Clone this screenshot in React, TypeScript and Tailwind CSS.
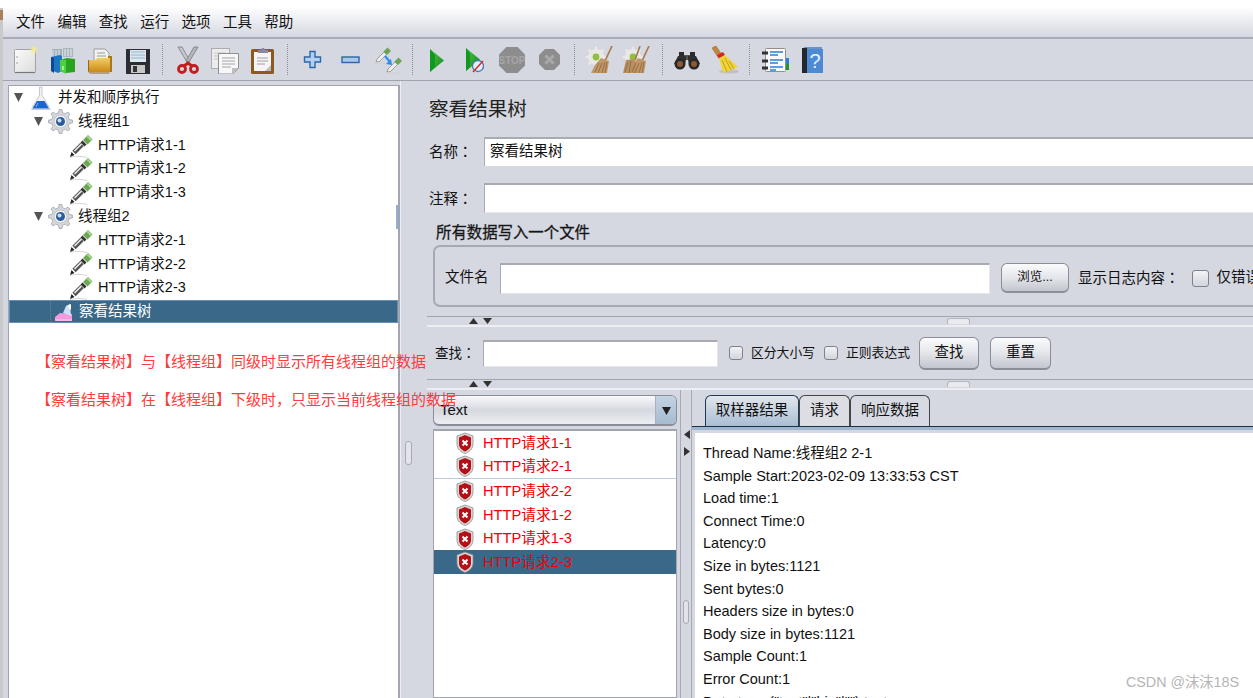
import React from "react";

const CJK = "font-['Liberation_Sans','Noto_Sans_CJK_SC',sans-serif]";

function gearPath(cx: number, cy: number, r1: number, r2: number, n: number) {
  let d = "";
  for (let i = 0; i < n; i++) {
    const a = (i / n) * Math.PI * 2;
    const s = Math.PI / n;
    const pts = [
      [a - s * 0.55, r1],
      [a - s * 0.3, r2],
      [a + s * 0.3, r2],
      [a + s * 0.55, r1],
    ];
    pts.forEach(([t, r], j) => {
      d += `${i === 0 && j === 0 ? "M" : "L"}${(cx + Math.cos(t) * r).toFixed(2)} ${(cy + Math.sin(t) * r).toFixed(2)} `;
    });
  }
  return d + "Z";
}

const Svg = ({ w, h, children }: { w: number; h: number; children: React.ReactNode }) => (
  <svg width={w} height={h} viewBox={`0 0 ${w} ${h}`} className="shrink-0 block">
    {children}
  </svg>
);

const Colon = () => <span className="font-['Noto_Sans_CJK_TC',sans-serif]">：</span>;

const NewDoc = () => (
  <Svg w={26} h={28}>
    <defs>
      <linearGradient id="nd" x1="0" y1="0" x2="1" y2="1">
        <stop offset="0" stopColor="#fbfbfb" />
        <stop offset="1" stopColor="#dcdcdc" />
      </linearGradient>
      <radialGradient id="ndg">
        <stop offset="0" stopColor="#fff27a" />
        <stop offset="1" stopColor="#fff27a" stopOpacity="0" />
      </radialGradient>
    </defs>
    <rect x="2.5" y="3.5" width="21" height="23" rx="1" fill="url(#nd)" stroke="#a3a3a3" />
    <path d="M3 26.5h20" stroke="#777" strokeWidth="1.2" />
    <circle cx="5" cy="11" r=".8" fill="#999" />
    <circle cx="5" cy="17" r=".8" fill="#999" />
    <circle cx="22" cy="4" r="4.5" fill="url(#ndg)" />
  </Svg>
);

const Books = () => (
  <Svg w={28} h={28}>
    <rect x="3" y="3" width="10" height="9" fill="#9fb0ba" />
    <rect x="14" y="2" width="10" height="9" fill="#a9b7bd" />
    <path d="M4 4v7M7 4v7M10 4v7M16 3v7M19 3v7M22 3v7" stroke="#e8eef0" />
    <path d="M2 11l9-2 2 1v15l-4 2-7-3z" fill="#1c74c6" />
    <path d="M2 11l3 1v15l-3-2z" fill="#0d4a8c" />
    <path d="M11 14l7-2 8 1v13l-9 1-6-2z" fill="#27a51e" />
    <path d="M11 14l6 0v14l-6-3z" fill="#4fd043" />
    <path d="M14 20v4" stroke="#d6ffd0" strokeWidth="1.2" />
  </Svg>
);

const Folder = () => (
  <Svg w={27} h={28}>
    <defs>
      <linearGradient id="fo" x1="0" y1="0" x2="0" y2="1">
        <stop offset="0" stopColor="#f3cd63" />
        <stop offset="1" stopColor="#c98a17" />
      </linearGradient>
    </defs>
    <path d="M7 3h11l4 4v10H7z" fill="#f2f2f2" stroke="#9c9c9c" />
    <path d="M10 7h8M10 10h9M10 13h9" stroke="#9a9a9a" />
    <path d="M21 10h4v16h-4z" fill="#a9781e" />
    <path d="M2 14h6l3-2h12v14H2z" fill="url(#fo)" />
    <path d="M1.5 14v11c0 1 1 2 2 2h19" fill="none" stroke="#97691a" />
  </Svg>
);

const Floppy = () => (
  <Svg w={26} h={28}>
    <path d="M1 3h24v25H1z" fill="#2b2d33" />
    <rect x="5" y="4" width="16" height="12" fill="#dfe7ee" />
    <path d="M6 6h14M6 9h14M6 12h14" stroke="#8fb3d1" strokeWidth="1.2" />
    <rect x="6" y="19" width="14" height="8" fill="#c7c7c7" />
    <rect x="8" y="20" width="4" height="6" fill="#333" />
  </Svg>
);

const Scissors = () => (
  <Svg w={24} h={28}>
    <path d="M2 1l9 15 3-1L6 1z" fill="#c6c8cc" stroke="#77797e" strokeWidth=".8" />
    <path d="M22 1l-9 15-3-1 8-14z" fill="#b5b7bb" stroke="#77797e" strokeWidth=".8" />
    <circle cx="6" cy="23" r="3.5" fill="none" stroke="#c31d1d" strokeWidth="2.8" />
    <circle cx="18" cy="23" r="3.5" fill="none" stroke="#c31d1d" strokeWidth="2.8" />
    <path d="M8 20l4-3 4 3" fill="none" stroke="#c31d1d" strokeWidth="3" />
  </Svg>
);

const Copy = () => (
  <Svg w={30} h={28}>
    <rect x="1.5" y="2.5" width="18" height="20" fill="#ececec" stroke="#adadad" />
    <path d="M4 7h12M4 10h12M4 13h12" stroke="#c6c6c6" />
    <path d="M8.5 7.5h20v15l-6 5.5h-14z" fill="#f7f7f7" stroke="#8f8f8f" />
    <path d="M12 12h13M12 15h13M12 18h13M12 21h9" stroke="#a3a3a3" />
    <path d="M22 28v-6h7z" fill="#bdbdbd" />
  </Svg>
);

const Clip = () => (
  <Svg w={25} h={28}>
    <rect x="1" y="3" width="23" height="25" rx="1.5" fill="#8b5a1c" />
    <path d="M4 6h17v19H4z" fill="#f5f5f5" />
    <path d="M7 12h11M7 15h11M7 18h8" stroke="#a0a0a0" />
    <path d="M15 25l6-6v6z" fill="#bdbdbd" />
    <path d="M8 7V4h3l1-2h2l1 2h3v3z" fill="#8a8d90" />
  </Svg>
);

const Plus = () => (
  <Svg w={19} h={19}>
    <path
      d="M7 1.5h5v5.5h5.5v5H12v5.5H7V12H1.500V7H7z"
      fill="#b3d0ec"
      stroke="#2c66ab"
      strokeWidth="1.4"
    />
  </Svg>
);

const Minus = () => (
  <Svg w={19} h={8}>
    <rect x="1" y="1" width="17" height="5.500" fill="#a9c8e6" stroke="#2c66ab" strokeWidth="1.4" />
  </Svg>
);

const DropperSmall = ({ x, y }: { x: number; y: number }) => (
  <g transform={`translate(${x} ${y})`}>
    <path d="M1 15l1-3 7-7 2.500 2.500-7 7z" fill="#ededed" stroke="#8d8d8d" strokeWidth=".8" />
    <path d="M8.500 4.500l4-4 3.500 3.500-4 4z" fill="#6ea356" />
  </g>
);

const Toggle = () => (
  <Svg w={28} h={28}>
    <DropperSmall x={1} y={1} />
    <DropperSmall x={12} y={11} />
    <path d="M1 17h13M12 27h13" stroke="#d0d0d0" />
    <path d="M11 10l5 6" stroke="#2f8cf0" strokeWidth="2.200" />
    <path d="M18 19l-6-1 5-5z" fill="#2f8cf0" />
  </Svg>
);

const Play = () => (
  <Svg w={16} h={26}>
    <defs>
      <linearGradient id="pl" x1="0" y1="0" x2="1" y2="1">
        <stop offset="0" stopColor="#5cc04e" />
        <stop offset="1" stopColor="#0a8a18" />
      </linearGradient>
    </defs>
    <path d="M1 2l14 11.500L1 25z" fill="url(#pl)" />
    <path d="M1 2v23l5-5V8z" fill="#0f9a1d" />
  </Svg>
);

const PlayNo = () => (
  <Svg w={19} h={27}>
    <path d="M1 2l14 11.500L1 25z" fill="url(#pl)" />
    <path d="M1 2v23l4-4V7z" fill="#0f9a1d" />
    <circle cx="13" cy="20" r="5.500" fill="#e5eef8" stroke="#3f78c0" strokeWidth="1.300" />
    <path d="M8 26l10-11" stroke="#e02a2a" strokeWidth="1.600" />
  </Svg>
);

const Stop = () => (
  <Svg w={28} h={28}>
    <path d="M8.500 1h11L27 8.500v11L19.500 27h-11L1 19.500v-11z" fill="#8d8d8d" />
    <text x="14" y="18" textAnchor="middle" fontSize="10" fontWeight="700" fill="#a6a6a6" fontFamily="Liberation Sans">
      STOP
    </text>
  </Svg>
);

const XStop = () => (
  <Svg w={23} h={23}>
    <path d="M7 1h9l6 6v9l-6 6H7l-6-6V7z" fill="#8d8d8d" />
    <path d="M7.500 7.500l8 8M15.500 7.500l-8 8" stroke="#a9a9a9" strokeWidth="3" />
  </Svg>
);

const GearBroom = ({ two }: { two?: boolean }) => (
  <Svg w={30} h={28}>
    <path d={gearPath(11, 11, 8.5, 11, 8)} fill="#e8e8e8" stroke="#cfcfcf" strokeWidth=".5" />
    <circle cx="11" cy="11" r="3.400" fill="#8fc23a" />
    <path d="M27 0l-7 15" stroke="#a5784a" strokeWidth="1.600" />
    {two && <path d="M18 0l-5 14" stroke="#a5784a" strokeWidth="1.600" />}
    <path d="M16 12l8 3-2 12H6l4-8z" fill="#c09768" />
    {two && <path d="M4 14l9-1 1 14H1z" fill="#b88f63" />}
    <path d="M10 26l4-9M13 27l4-10M17 27l3-11M20 27l2-11" stroke="#94693c" strokeWidth=".9" />
    {two && <path d="M3 26l3-10M7 27l2-12" stroke="#94693c" strokeWidth=".9" />}
  </Svg>
);

const Binoc = () => (
  <Svg w={28} h={20}>
    <path d="M6 2h5v6H6zM17 2h5v6h-5z" fill="#2b2b2b" />
    <rect x="11" y="5" width="6" height="5" fill="#555" />
    <path d="M5 6h8v4l-1 4H1z" fill="#2f2f2f" />
    <path d="M15 6h8l4 8H16l-1-4z" fill="#2f2f2f" />
    <circle cx="7" cy="14" r="5.500" fill="#282828" />
    <circle cx="21" cy="14" r="5.500" fill="#282828" />
    <circle cx="7" cy="14" r="3" fill="#8a5a30" />
    <circle cx="21" cy="14" r="3" fill="#8a5a30" />
  </Svg>
);

const Broom = () => (
  <Svg w={28} h={28}>
    <ellipse cx="18" cy="25.500" rx="10" ry="2" fill="#bfc0c4" />
    <path d="M1 2l4-2 6 9-4 2z" fill="#c0883c" stroke="#96682c" strokeWidth=".6" />
    <path d="M6 9l6-3 2 3-6 4z" fill="#d8232a" />
    <path d="M8 12l6-3 13 12-14 6-2-4z" fill="#f0d43a" />
    <path d="M11 14l5 12M14 12l6 12M18 15l5 8" stroke="#c2a11c" />
  </Svg>
);

const ListIcon = () => (
  <Svg w={28} h={26}>
    <rect x="22" y="11" width="6" height="6" fill="#2a7fd8" />
    <rect x="22" y="17" width="6" height="6" fill="#1f9a24" />
    <rect x="4.500" y="1.500" width="20" height="23" rx="1" fill="#f8f8f8" stroke="#8f8f8f" />
    <path d="M1 6h6M1 14h6M1 21h6" stroke="#333" strokeWidth="3" />
    <path d="M9 5h13M9 8h8M9 13h13M9 16h8M9 20h13M9 23h6" stroke="#2a7fd8" strokeWidth="1.400" />
  </Svg>
);

const Help = () => (
  <Svg w={23} h={28}>
    <path d="M3 1h18v3H3z" fill="#6a93c4" />
    <rect x="1" y="2" width="5" height="25" fill="#23262a" />
    <rect x="6" y="3" width="16" height="24" fill="#4d8ad4" />
    <text x="14" y="22" textAnchor="middle" fontSize="20" fill="#e8f2ff" fontFamily="Liberation Sans">
      ?
    </text>
  </Svg>
);

const Dropper = () => (
  <Svg w={24} h={24}>
    <path d="M1 23.500c6-2 12-1 17 0" fill="none" stroke="#d5d5d5" />
    <path d="M5 18.500l8-8" stroke="#555" strokeWidth="4.600" />
    <path d="M5.500 17l7-7" stroke="#f2f2f2" strokeWidth="1.500" />
    <path d="M1 23l1.500-5 3 3z" fill="#222" />
    <path d="M11.500 8.500l4 4 2-2-4-4z" fill="#333" />
    <path d="M14 6l5-5 4.500 4.500-5 5z" fill="#6ea656" />
    <path d="M19 1.500l4 4-1.500 1.500-4-4z" fill="#a2d48a" />
  </Svg>
);

const Flask = () => (
  <Svg w={20} h={24}>
    <path d="M8.500 1h2.500v8l7 12H1.500L8.500 9z" fill="#f0f2f5" stroke="#b8bcc2" strokeWidth=".8" />
    <path d="M6 15h7.500l4.500 7.500H1.500z" fill="#1a66d0" />
    <path d="M7 17l-2 4" stroke="#7fb0ee" />
    <path d="M0.500 23h19" stroke="#8ca0b8" />
  </Svg>
);

const Gear = () => (
  <Svg w={25} h={25}>
    <path d={gearPath(12.5, 12.5, 9, 12, 8)} fill="#d6d8dc" stroke="#9ea1a7" strokeWidth=".8" />
    <circle cx="12.500" cy="12.500" r="6.500" fill="#f1f2f4" stroke="#a9acb2" strokeWidth=".6" />
    <circle cx="12.500" cy="12.500" r="4.500" fill="#2d5c9e" />
    <circle cx="11.500" cy="11.500" r="2" fill="#cfe0f4" />
  </Svg>
);

const ResultIcon = () => (
  <Svg w={20} h={20}>
    <path d="M1 18v-3l5-4 12 1v7H2z" fill="#f39adf" />
    <path d="M1 18h17" stroke="#f6d3ef" />
    <path d="M9 11l3-7 4-2 1 12z" fill="#cfe0fb" />
    <path d="M13 4l4-2v6z" fill="#fff" />
  </Svg>
);

const Shield = () => (
  <Svg w={20} h={22}>
    <path d="M10 1l8 3v8c0 5-4 8-8 9.500C6 20 2 17 2 12V4z" fill="#d9d9d9" stroke="#8a8a8a" strokeWidth=".8" />
    <path d="M10 3l6 2.500V12c0 4-3 6-6 7.500C7 18 4 16 4 12V5.500z" fill="#b50e14" />
    <path d="M7.500 8.500l5 5M12.500 8.500l-5 5" stroke="#fff" strokeWidth="2" />
  </Svg>
);

const Tri = () => (
  <svg width="9" height="9" viewBox="0 0 9 9" className="shrink-0">
    <path d="M0 0h9L4.500 9z" fill="#555" />
  </svg>
);

const Sep = () => (
  <div className="w-[12.4px] h-[31px] flex justify-center shrink-0">
    <div className="w-0 h-full border-l border-dotted border-[#8b8e97]" />
  </div>
);

const Slot = ({ children }: { children: React.ReactNode }) => (
  <div className="w-[37.5px] h-full flex items-center justify-center shrink-0">{children}</div>
);

const Splitter = () => (
  <div className="h-[11px] border-t border-[#a2a5ae] border-b-2 border-b-[#eceef2] relative shrink-0 flex items-center">
    <svg width="24" height="6" viewBox="0 0 24 6" className="ml-[42px] shrink-0">
      <path d="M0 6h9L4.500 0z" fill="#333" />
      <path d="M14 0h9L18.500 6z" fill="#333" />
    </svg>
    <div className="ml-[454px] w-[23px] h-[6px] rounded-t-[3px] border border-[#b2b5bd] border-b-0 bg-[#e8eaee] shrink-0" />
  </div>
);

const Check = ({ cls = "w-[14px] h-[14px]" }: { cls?: string }) => (
  <div className={`rounded-[3px] border border-[#7f828a] bg-gradient-to-b from-[#f2f3f6] to-[#d2d5dc] shrink-0 ${cls}`} />
);

const Btn = ({ children, cls }: { children: React.ReactNode; cls: string }) => (
  <div
    className={`rounded-[6px] border border-[#8b8e96] border-b-2 bg-gradient-to-b from-[#fbfbfc] via-[#e4e6ea] to-[#c3c6ce] flex items-center justify-center shrink-0 text-[#111] ${cls}`}
  >
    {children}
  </div>
);

const TextInput = ({ cls }: { cls: string }) => (
  <div className={`bg-white border-t-2 border-l border-[#a9abb3] border-r border-r-[#e6e7ea] border-b border-b-[#e6e7ea] ${cls}`} />
);

const Req = ({ t }: { t: string }) => (
  <div className="h-[23.8px] flex items-center pl-[60px]">
    <Dropper />
    <span className="ml-[5px]">{t}</span>
  </div>
);

const Group = ({ t, mark }: { t: string; mark?: boolean }) => (
  <div className={`h-[23.8px] flex items-center pl-[25px] ${mark ? "border-r-2 border-r-[#8fb0cf]" : ""}`}>
    <Tri />
    <div className="ml-[5px]">
      <Gear />
    </div>
    <span className="ml-[5px]">{t}</span>
  </div>
);

const ResRow = ({ t, sel, line }: { t: string; sel?: boolean; line?: boolean }) => (
  <div
    className={`h-[23.9px] flex items-center pl-[21px] ${sel ? "bg-[#3a6888]" : ""} ${line ? "border-b border-b-[#b9cbdc]" : ""}`}
  >
    <Shield />
    <span className="ml-[8px] text-[#f00000]">{t}</span>
  </div>
);

const lines = [
  "Thread Name:线程组2 2-1",
  "Sample Start:2023-02-09 13:33:53 CST",
  "Load time:1",
  "Connect Time:0",
  "Latency:0",
  "Size in bytes:1121",
  "Sent bytes:0",
  "Headers size in bytes:0",
  "Body size in bytes:1121",
  "Sample Count:1",
  "Error Count:1",
  'Data type ("text"|"bin"|""):text',
];

export default function App() {
  return (
    <div className={`relative w-[1253px] h-[698px] overflow-hidden bg-white text-[14.5px] text-[#111] ${CJK}`}>
      <div className="h-[8px] bg-white" />
      <div className="flex h-[690px]">
        <div className="w-[3px] bg-[#c9c9c9] shrink-0 pt-[2px]">
          <div className="h-[10px] bg-[#a8805a]" />
        </div>
        <div className="flex-1 flex flex-col min-w-0 bg-[#d5d8e1]">
          {/* menu */}
          <div className="h-[29px] bg-gradient-to-b from-[#fdfdfe] to-[#d5d8e1] flex items-center pl-[13px] gap-[12.4px] shrink-0">
            {["文件", "编辑", "查找", "运行", "选项", "工具", "帮助"].map((m) => (
              <span key={m} className="w-[29px] whitespace-nowrap">
                {m}
              </span>
            ))}
          </div>
          <div className="h-[2px] bg-[#a8aab6] shrink-0" />
          {/* toolbar */}
          <div className="h-[42px] border-b border-[#a0a3ad] flex items-center pl-[3.5px] shrink-0">
            <Slot><NewDoc /></Slot>
            <Slot><Books /></Slot>
            <Slot><Folder /></Slot>
            <Slot><Floppy /></Slot>
            <Sep />
            <Slot><Scissors /></Slot>
            <Slot><Copy /></Slot>
            <Slot><Clip /></Slot>
            <Sep />
            <Slot><Plus /></Slot>
            <Slot><Minus /></Slot>
            <Slot><Toggle /></Slot>
            <Sep />
            <Slot><Play /></Slot>
            <Slot><PlayNo /></Slot>
            <Slot><Stop /></Slot>
            <Slot><XStop /></Slot>
            <Sep />
            <Slot><GearBroom /></Slot>
            <Slot><GearBroom two /></Slot>
            <Sep />
            <Slot><Binoc /></Slot>
            <Slot><Broom /></Slot>
            <Sep />
            <Slot><ListIcon /></Slot>
            <Slot><Help /></Slot>
          </div>
          {/* main */}
          <div className="flex-1 flex min-h-0">
            <div className="w-[5px] shrink-0" />
            {/* tree */}
            <div className="w-[392px] shrink-0 mt-[4px] bg-white border-t border-l border-r-2 border-[#a3a5ae]">
              <div className="h-[23.8px] flex items-center pl-[5px]">
                <Tri />
                <div className="ml-[8px]">
                  <Flask />
                </div>
                <span className="ml-[7px]">并发和顺序执行</span>
              </div>
              <Group t="线程组1" />
              <Req t="HTTP请求1-1" />
              <Req t="HTTP请求1-2" />
              <Req t="HTTP请求1-3" />
              <Group t="线程组2" mark />
              <Req t="HTTP请求2-1" />
              <Req t="HTTP请求2-2" />
              <Req t="HTTP请求2-3" />
              <div className="h-[23px] flex items-center pl-[40px] bg-[#3a6888] border border-[#6591b8] text-white">
                <div className="h-full w-0 border-l border-dotted border-[#6e8091]" />
                <div className="ml-[3px]">
                  <ResultIcon />
                </div>
                <span className="ml-[5px]">察看结果树</span>
              </div>
            </div>
            {/* divider */}
            <div className="w-[15px] shrink-0 flex flex-col items-center pt-[360px] border-l border-[#eceef2]">
              <div className="w-[7px] h-[24px] rounded-[3px] border border-[#a7aab2] bg-[#e2e4e9]" />
            </div>
            {/* right */}
            <div className="w-[900px] shrink-0 flex flex-col">
              <div className="h-[56px] pl-[14px] flex items-end pb-[14px] shrink-0">
                <span className="text-[19.6px] leading-[28px] text-[#222]">察看结果树</span>
              </div>
              <div className="flex items-center h-[29px] pl-[14px] shrink-0">
                <span className="w-[55px]">
                  名称<Colon />
                </span>
                <div className="flex-1 h-full bg-white border-t-2 border-l border-[#a9abb3] pl-[5px] flex items-center pb-[2px]">
                  察看结果树
                </div>
              </div>
              <div className="flex items-center h-[30px] pl-[14px] mt-[17px] shrink-0">
                <span className="w-[55px] pt-[1px]">
                  注释<Colon />
                </span>
                <TextInput cls="flex-1 h-full" />
              </div>
              <div className="h-[32px] pl-[21px] flex items-center pt-[8px] shrink-0">
                <span className="text-[15.4px] text-[#111] [-webkit-text-stroke:0.3px_#222]">所有数据写入一个文件</span>
              </div>
              <div className="h-[62px] ml-[18px] -mr-[20px] rounded-l-[7px] border-2 border-[#a6a9b1] flex items-center pl-[10px] pt-[4px] shrink-0">
                <span className="w-[55px] shrink-0">文件名</span>
                <TextInput cls="w-[490px] h-[31px] shrink-0" />
                <Btn cls="ml-[11px] w-[68px] h-[30px] text-[12.5px]">浏览...</Btn>
                <span className="ml-[9px] whitespace-nowrap">
                  显示日志内容<Colon />
                </span>
                <div className="ml-[12px]">
                  <Check cls="w-[17px] h-[17px]" />
                </div>
                <span className="ml-[8px] whitespace-nowrap">仅错误日志</span>
              </div>
              <div className="h-[9px] shrink-0" />
              <div className="pl-[12px] shrink-0">
                <Splitter />
              </div>
              <div className="h-[52px] flex items-center pl-[20px] shrink-0">
                <span className="w-[48px] text-[13.5px] pt-[1px]">
                  查找<Colon />
                </span>
                <TextInput cls="w-[235px] h-[27px] shrink-0" />
                <div className="ml-[11px]">
                  <Check />
                </div>
                <span className="ml-[8px] text-[12.8px] w-[64px] whitespace-nowrap">区分大小写</span>
                <div className="ml-[9px]">
                  <Check />
                </div>
                <span className="ml-[8px] text-[12.8px] w-[64px] whitespace-nowrap">正则表达式</span>
                <Btn cls="ml-[9px] w-[60px] h-[33px]">查找</Btn>
                <Btn cls="ml-[11px] w-[61px] h-[33px]">重置</Btn>
              </div>
              <div className="pl-[12px] shrink-0">
                <Splitter />
              </div>
              {/* bottom */}
              <div className="flex-1 flex min-h-0">
                <div className="w-[265px] shrink-0 pl-[18px] pr-[3px] pt-[5px] flex flex-col">
                  <div className="h-[31px] rounded-[6px] border border-[#8a8d96] border-b-2 bg-gradient-to-b from-[#fafafb] via-[#d5d8df] to-[#eceef1] flex items-center pl-[6px] overflow-hidden shrink-0">
                    <span className="flex-1 text-[15px]">Text</span>
                    <div className="w-[21px] h-full bg-gradient-to-b from-[#c3d3e2] to-[#a6bcd1] border-l border-[#a5b2c0] flex items-center justify-center">
                      <svg width="9" height="9" viewBox="0 0 9 9">
                        <path d="M0 1h9L4.500 9z" fill="#222" />
                      </svg>
                    </div>
                  </div>
                  <div className="mt-[3px] flex-1 bg-white border border-[#a3a5ae] border-t-2 text-[14.7px]">
                    <ResRow t="HTTP请求1-1" />
                    <ResRow t="HTTP请求2-1" line />
                    <ResRow t="HTTP请求2-2" />
                    <ResRow t="HTTP请求1-2" />
                    <ResRow t="HTTP请求1-3" />
                    <ResRow t="HTTP请求2-3" sel />
                  </div>
                </div>
                <div className="w-[12px] shrink-0 border-l border-r border-[#a8abb4] flex flex-col items-center pt-[40px] gap-[8px] relative">
                  <svg width="6" height="9" viewBox="0 0 6 9" className="ml-[1px]">
                    <path d="M6 0v9L0 4.500z" fill="#333" />
                  </svg>
                  <svg width="6" height="9" viewBox="0 0 6 9" className="ml-[1px]">
                    <path d="M0 0v9l6-4.500z" fill="#333" />
                  </svg>
                  <div className="mt-[136px] w-[6px] h-[24px] rounded-[3px] border border-[#a7aab2] bg-[#e2e4e9]" />
                </div>
                <div className="flex-1 min-w-0 flex flex-col pt-[5px]">
                  <div className="h-[32px] flex pl-[13px] shrink-0 border-b border-[#1d3145]">
                    <div className="w-[94px] rounded-t-[6px] border border-b-0 border-[#1f3a55] bg-gradient-to-b from-[#e3e6ec] to-[#a9bed3] flex items-center justify-center">
                      取样器结果
                    </div>
                    <div className="w-[51px] rounded-t-[6px] border border-b-0 border-[#444] bg-[#dcdee4] flex items-center justify-center">
                      请求
                    </div>
                    <div className="w-[80px] rounded-t-[6px] border border-b-0 border-[#444] bg-[#d7dae2] flex items-center justify-center">
                      响应数据
                    </div>
                  </div>
                  <div className="h-[3px] bg-[#9fb6cf] shrink-0" />
                  <div className="h-[3px] shrink-0" />
                  <div className="flex-1 ml-[3px] bg-white pl-[8px] pt-[9px] overflow-hidden leading-[22.6px] whitespace-nowrap text-[#111]">
                    {lines.map((l) => (
                      <div key={l}>{l}</div>
                    ))}
                  </div>
                </div>
              </div>
            </div>
          </div>
        </div>
      </div>
      <div className="absolute left-[36px] top-[351px] text-[15px] leading-[22px] text-[#ff3b3b] whitespace-nowrap">
        【察看结果树】与【线程组】同级时显示所有线程组的数据
      </div>
      <div className="absolute left-[36px] top-[389px] text-[15px] leading-[22px] text-[#ff3b3b] whitespace-nowrap">
        【察看结果树】在【线程组】下级时，只显示当前线程组的数据
      </div>
      <div className="absolute left-[1126px] top-[673px] text-[14.3px] leading-[18px] text-[#b5b5b5] whitespace-nowrap">
        CSDN @沫沫18S
      </div>
    </div>
  );
}
